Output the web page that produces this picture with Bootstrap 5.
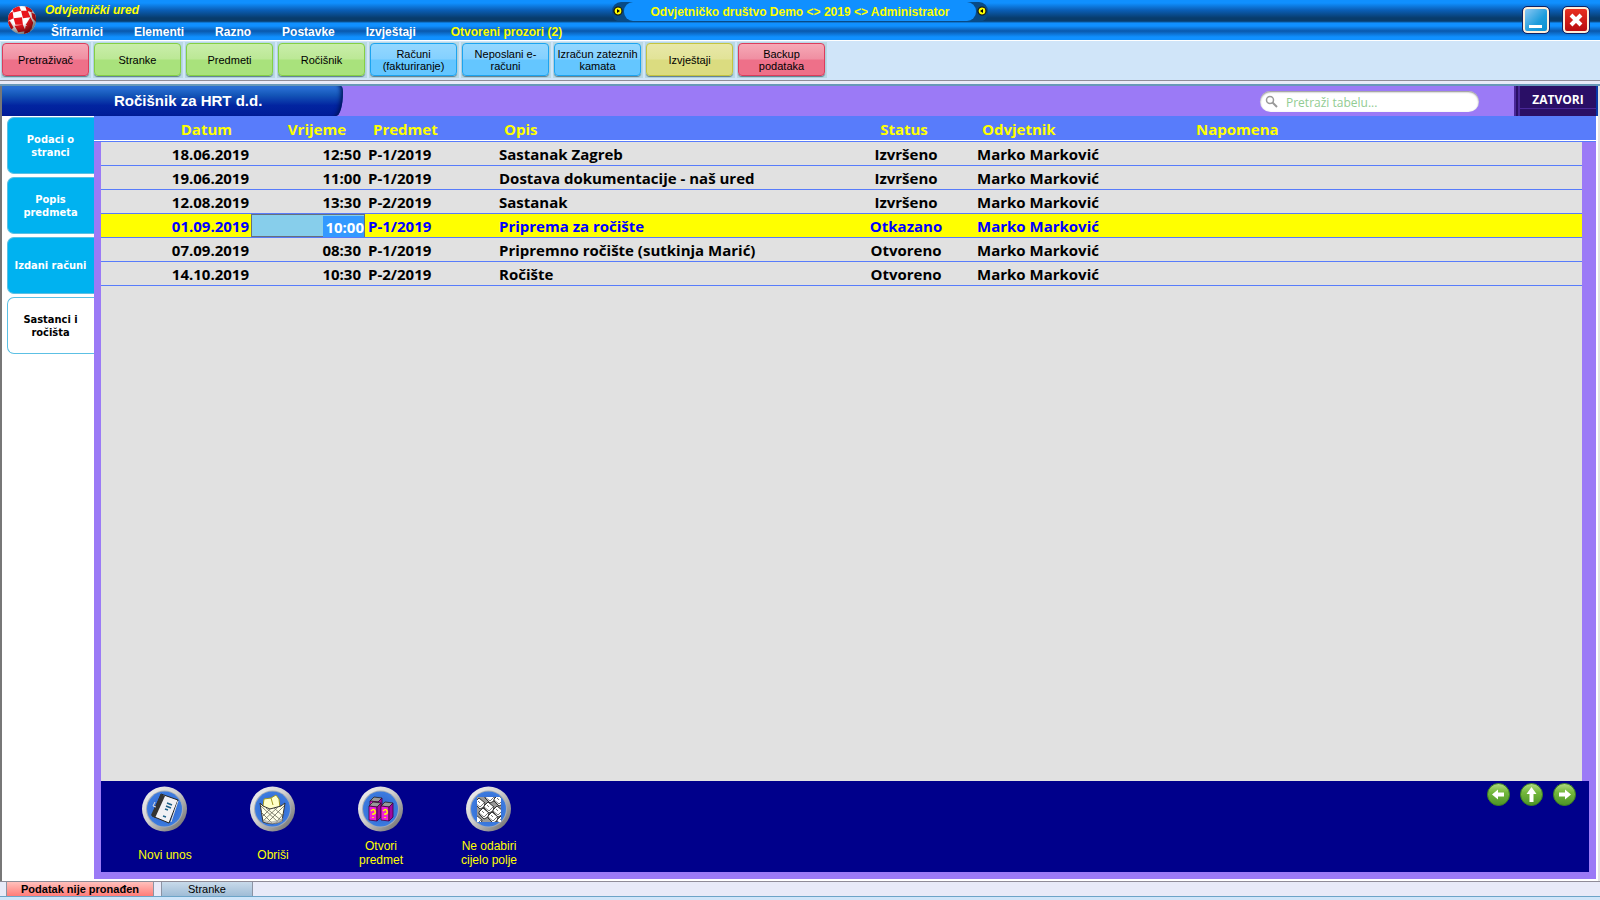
<!DOCTYPE html>
<html lang="hr">
<head>
<meta charset="utf-8">
<meta name="viewport" content="width=device-width, initial-scale=1">
<title>Odvjetnički ured</title>
<link rel="stylesheet" href="https://cdn.jsdelivr.net/npm/bootstrap@5.3.0/dist/css/bootstrap.min.css">
<style>
  body { font-family: "Liberation Sans", Arial, sans-serif; font-size: 12px; line-height: 14px; background: #fff; color: #000; }
  button, input { font-family: inherit; }
  .app { min-height: 100vh; }

  /* title and menu */
  .topbar { background: linear-gradient(#1090ff 0, #1090ff 3px, #0a5fb8 10px, #083c6c 18px, #083c6c 21px, #0b5aa0 22px, #1090ff 23px, #1090ff 26px, #0a58ac 31px, #1090ff 37px, #1090ff 40px); height: 40px; }
  .logo { width: 30px; height: 30px; margin: 5px 0 0 7px; }
  .titlebox { height: 22px; padding-left: 8px; }
  .app-title { color: #ff0; font-weight: bold; font-style: italic; line-height: 20px; }
  .menu { gap: 31px; padding-left: 14px; height: 18px; line-height: 20px; }
  .menu a { color: #fff; font-weight: bold; text-decoration: none; }
  .menu a.windows { color: #ff0; padding-left: 4px; }
  .firm { left: 50%; top: 2px; width: 376px; height: 20px; margin-left: -188px; background: #084a86; border-radius: 9px; padding: 0 1px; }
  .firm-name { background: #1090ff; border-radius: 9px; color: #ff0; font-weight: bold; line-height: 20px; height: 19px; width: 352px; }
  .winbtn { width: 26px; height: 26px; border: 2px solid #ffeed8; border-radius: 4px; outline: 1px solid #102060; padding: 0; }
  .win-min { background: linear-gradient(135deg, #8cc8f4, #1c9cdc 60%, #0a90d0); }
  .win-close { background: linear-gradient(#e83020, #b80c10); }
  .winbtns { gap: 14px; padding: 7px 11px 0 0; }

  /* shortcut bar */
  .tools { background: #d0e5f9; border-top: 1px solid #fff; border-bottom: 1px solid #8f8c98; height: 41px; padding: 1px 0 0 1px; gap: 2px; }
  .tool-slot { background: #b9d9e4; padding: 1px; width: 90px; height: 36px; }
  .tool { width: 87px; height: 33px; border: 1px solid; border-radius: 4px; font-size: 11px; line-height: 12px; padding: 0; color: #000; box-shadow: 0 1px 1px #5c7c8c; }
  .t-red { background: linear-gradient(#f6a9b6, #f08fa2 48%, #ee7089 52%, #ee7089); border-color: #dc3c5c; }
  .t-green { background: linear-gradient(#c9eeaa, #bce896 48%, #a9e27c 52%, #a9e27c); border-color: #84d044; }
  .t-blue { background: linear-gradient(#94d8ff, #84d0ff 48%, #64c6ff 52%, #64c6ff); border-color: #1ca4f0; }
  .t-yellow { background: linear-gradient(#e8e8a8, #e2e398 48%, #dbdc80 52%, #dbdc80); border-color: #c4c440; }
  .divider { height: 5px; background: #e8eaf8; border-bottom: 2px solid #6898b8; }

  /* window heading */
  .frame { border-left: 2px solid #777; border-right: 2px solid #e4e4e4; }
  .heading { background: #9b7af6; height: 30px; border-right: 2px solid #0838a8; }
  .heading-tab { width: 341px; height: 30px; background: linear-gradient(#2e74da, #1456b8 30%, #0224a0 65%, #001c98); border-radius: 0 2px 7px 0 / 0 6px 24px 0; box-shadow: inset -5px 0 4px -3px #001458; }
  .heading-tab h1 { color: #fff; font-size: 15px; line-height: 30px; font-weight: bold; padding-left: 112px; margin: 0; }
  .finder { background: #fff; border-radius: 11px; width: 219px; height: 21px; margin: 5px 35px 0 0; padding-left: 5px; box-shadow: inset 0 1px 2px #888; }
  .finder input { font-family: "Open Sans", sans-serif; font-size: 12px; line-height: 16px; border: 0; background: transparent; outline: 0; width: 180px; padding: 2px 0 0 8px; }
  .finder input::placeholder { color: #92cc92; opacity: 1; }
  .close-view { background: #2a0f66; color: #fff; border: 0; border-left: 6px double #4a2898; font-size: 12px; height: 30px; width: 82px; padding: 0 0 3px; font-family: "Open Sans", sans-serif; font-weight: bold; box-shadow: inset 0 -7px 0 #2a0f66, inset 0 -8px 0 #4a2898; }

  /* left tabs */
  .side { width: 92px; padding: 1px 0 0 5px; gap: 3px; }
  .side button { height: 57px; border: 1px solid #5cc0e4; border-right: 0; border-radius: 7px 0 0 7px; background: #00b2f0; color: #fff; font-family: "DejaVu Sans Condensed", "DejaVu Sans", sans-serif; font-weight: bold; font-size: 11px; line-height: 13px; padding: 0 1px 0 0; }
  .side button.current { background: #fff; color: #000; }

  /* schedule grid */
  .board { background: linear-gradient(#587cfb 24px, #fff 24px, #fff 25px, #587cfb 25px, #587cfb 26px, #9b7af6 26px); padding: 0 7px 7px; margin: 0 2px 2px 0; }
  .sheet { margin-right: 7px; background: linear-gradient(#587cfb 24px, #fff 24px, #fff 25px, #587cfb 25px, #587cfb 26px, #e1e1e1 26px); }
  .hearings { table-layout: fixed; width: 100%; font-family: "Open Sans", sans-serif; font-size: 15px; line-height: 21px; font-weight: bold; border-collapse: separate; border-spacing: 0; }
  .hearings th { color: #ff0; height: 26px; padding: 2px 9px 1px; white-space: nowrap; }
  .hearings td { height: 24px; padding: 2px 4px 0; border-bottom: 1px solid #587cfb; white-space: nowrap; }
  .hearings td:nth-child(3), .hearings th:nth-child(3) { padding-left: 3px; }
  .hearings th:nth-child(3) { padding-left: 8px; }
  .hearings .num { text-align: right; padding-right: 2px; }
  .hearings .num + .num { padding-right: 4px; }
  .hearings th.num, .hearings th.num + .num { padding-right: 19px; }
  .hearings .mid { text-align: center; }
  .hearings th.mid { padding: 2px 4px 1px 0; }
  .hearings .chosen td { background: #ff0; color: #00f; }
  .hearings .chosen td.editing { background: #87ceeb; box-shadow: inset 0 0 0 1px #66707c; padding: 1px 1px 0 0; }
  .editing input { width: 41px; height: 21px; border: 0; padding: 2px 0 0; background: #3399ff; color: #fff; font-weight: bold; text-align: right; display: block; margin-left: auto; }
  .c-date { width: 150px; } .c-time { width: 114px; } .c-case { width: 130px; } .c-text { width: 344px; } .c-state { width: 134px; } .c-who { width: 214px; }

  /* action bar */
  .actions { background: #00008b; height: 91px; padding: 5px 13px 0 10px; }
  .action { width: 108px; border: 0; background: transparent; color: #ff0; font-size: 12px; line-height: 14px; padding: 0; }
  .action svg { width: 47px; height: 46px; margin: 0 2px 7px 0; }
  .action span { height: 28px; }
  .action span.one-line { padding-top: 3px; }
  .steps { gap: 10px; }
  .step { border: 0; background: transparent; padding: 0; width: 23px; height: 23px; margin-top: -3px; }

  /* status strip */
  .status { background: #e8eaf8; border-top: 1px solid #8f8c98; border-bottom: 1px solid #6ca4c8; height: 16px; padding-left: 6px; gap: 7px; }
  .status button { border: 0; border-left: 1px solid #8c94a4; border-right: 1px solid #8c94a4; line-height: 14px; height: 14px; padding: 0; font-size: 11px; }
  .s-alert { width: 148px; font-weight: bold; background: linear-gradient(#ffc0bc, #ff7c78); }
  .s-win { width: 92px; background: linear-gradient(#c8daea, #9fbcd6); }
  .base { height: 3px; background: #d0e5f9; }
</style>
</head>
<body>
<div class="app d-flex flex-column">
  <header class="topbar d-flex position-relative">
    <svg class="logo flex-shrink-0" viewBox="0 0 32 32" aria-hidden="true">
      <defs>
        <radialGradient id="ball" cx=".4" cy=".35" r=".65"><stop offset=".5" stop-color="#000" stop-opacity="0"/><stop offset="1" stop-color="#000" stop-opacity=".55"/></radialGradient>
        <clipPath id="disc"><circle cx="16" cy="16" r="15"/></clipPath>
      </defs>
      <circle cx="16" cy="16" r="15" fill="#fff"/>
      <g clip-path="url(#disc)" fill="#e8141c">
        <path d="M5 2l8-1 2 5-8 2zM19 0l8 3 0 5-6-2zM0 10l6-3 1 7-6 3zM15 6l7 0 3 7-8 1zM26 8l6 3-1 7-4-4zM7 14l9-1 1 8-8 0zM25 13l3 6-2 7-6-5zM0 18l3-1 4 7-3 3zM8 22l9-1 3 7-8 1zM20 22l6 2-2 6-6 1z"/>
      </g>
      <circle cx="16" cy="16" r="15" fill="url(#ball)"/>
    </svg>
    <div class="flex-grow-1">
      <div class="titlebox"><div class="app-title">Odvjetnički ured</div></div>
      <nav class="menu d-flex">
        <a href="#">Šifrarnici</a><a href="#">Elementi</a><a href="#">Razno</a><a href="#">Postavke</a><a href="#">Izvještaji</a><a href="#" class="windows">Otvoreni prozori (2)</a>
      </nav>
    </div>
    <div class="firm position-absolute d-flex align-items-start justify-content-between">
      <svg width="10" height="18" viewBox="0 0 10 18" aria-hidden="true"><circle cx="5" cy="9" r="4" fill="#ff0" stroke="#111" stroke-width="1.2"/><path d="M4 7l3 2-3 2z"/></svg>
      <div class="firm-name text-center">Odvjetničko društvo Demo &lt;&gt; 2019 &lt;&gt; Administrator</div>
      <svg width="10" height="18" viewBox="0 0 10 18" aria-hidden="true"><circle cx="5" cy="9" r="4" fill="#ff0" stroke="#111" stroke-width="1.2"/><path d="M6 7l-3 2 3 2z"/></svg>
    </div>
    <div class="winbtns d-flex">
      <button class="winbtn win-min" aria-label="Minimiziraj"><svg class="d-block" width="22" height="22"><path d="M4 17.500h13" stroke="#fff" stroke-width="3"/></svg></button>
      <button class="winbtn win-close" aria-label="Zatvori"><svg class="d-block" width="22" height="22"><path d="M6 6l10 10M16 6L6 16" stroke="#fff" stroke-width="4"/></svg></button>
    </div>
  </header>

  <div class="tools d-flex">
    <div class="tool-slot"><button class="tool t-red">Pretraživač</button></div>
    <div class="tool-slot"><button class="tool t-green">Stranke</button></div>
    <div class="tool-slot"><button class="tool t-green">Predmeti</button></div>
    <div class="tool-slot"><button class="tool t-green">Ročišnik</button></div>
    <div class="tool-slot"><button class="tool t-blue">Računi<br>(fakturiranje)</button></div>
    <div class="tool-slot"><button class="tool t-blue">Neposlani e-<br>računi</button></div>
    <div class="tool-slot"><button class="tool t-blue text-nowrap">Izračun zateznih<br>kamata</button></div>
    <div class="tool-slot"><button class="tool t-yellow">Izvještaji</button></div>
    <div class="tool-slot"><button class="tool t-red">Backup<br>podataka</button></div>
  </div>
  <div class="divider"></div>

  <div class="frame d-flex flex-column flex-grow-1">
    <div class="heading d-flex">
      <div class="heading-tab"><h1>Ročišnik za HRT d.d.</h1></div>
      <label class="finder d-flex align-items-center ms-auto">
        <svg width="13" height="13" viewBox="0 0 13 13" fill="none" stroke="#999" aria-hidden="true"><circle cx="5" cy="5" r="3.500" stroke-width="1.500"/><path d="M7.500 7.500L12 12" stroke-width="2"/></svg>
        <input type="text" placeholder="Pretraži tabelu..." aria-label="Pretraži tabelu">
      </label>
      <button class="close-view">ZATVORI</button>
    </div>
    <div class="d-flex flex-grow-1">
      <nav class="side d-flex flex-column flex-shrink-0">
        <button>Podaci o<br>stranci</button>
        <button>Popis<br>predmeta</button>
        <button class="text-nowrap">Izdani računi</button>
        <button class="current">Sastanci i<br>ročišta</button>
      </nav>
      <main class="board d-flex flex-column flex-grow-1">
        <div class="sheet flex-grow-1">
          <table class="hearings">
            <colgroup><col class="c-date"><col class="c-time"><col class="c-case"><col class="c-text"><col class="c-state"><col class="c-who"><col></colgroup>
            <thead><tr><th class="num">Datum</th><th class="num">Vrijeme</th><th>Predmet</th><th>Opis</th><th class="mid">Status</th><th>Odvjetnik</th><th>Napomena</th></tr></thead>
            <tbody>
              <tr><td class="num">18.06.2019</td><td class="num">12:50</td><td>P-1/2019</td><td>Sastanak Zagreb</td><td class="mid">Izvršeno</td><td>Marko Marković</td><td></td></tr>
              <tr><td class="num">19.06.2019</td><td class="num">11:00</td><td>P-1/2019</td><td>Dostava dokumentacije - naš ured</td><td class="mid">Izvršeno</td><td>Marko Marković</td><td></td></tr>
              <tr><td class="num">12.08.2019</td><td class="num">13:30</td><td>P-2/2019</td><td>Sastanak</td><td class="mid">Izvršeno</td><td>Marko Marković</td><td></td></tr>
              <tr class="chosen"><td class="num">01.09.2019</td><td class="num editing"><input type="text" value="10:00" aria-label="Vrijeme"></td><td>P-1/2019</td><td>Priprema za ročište</td><td class="mid">Otkazano</td><td>Marko Marković</td><td></td></tr>
              <tr><td class="num">07.09.2019</td><td class="num">08:30</td><td>P-1/2019</td><td>Pripremno ročište (sutkinja Marić)</td><td class="mid">Otvoreno</td><td>Marko Marković</td><td></td></tr>
              <tr><td class="num">14.10.2019</td><td class="num">10:30</td><td>P-2/2019</td><td>Ročište</td><td class="mid">Otvoreno</td><td>Marko Marković</td><td></td></tr>
            </tbody>
          </table>
        </div>
        <div class="actions d-flex align-items-start">
          <svg class="position-absolute" width="0" height="0" aria-hidden="true"><defs>
            <linearGradient id="rim" x1="0" y1="0" x2="1" y2="1"><stop offset="0" stop-color="#f4f4f4"/><stop offset=".45" stop-color="#d0d0d0"/><stop offset="1" stop-color="#606060"/></linearGradient>
            <radialGradient id="well"><stop offset="0" stop-color="#2c5cc8"/><stop offset="1" stop-color="#3c7ce0"/></radialGradient>
            <linearGradient id="leaf" x1="0" y1="0" x2="0" y2="1"><stop offset="0" stop-color="#b4dc84"/><stop offset=".4" stop-color="#74b83c"/><stop offset="1" stop-color="#4c9428"/></linearGradient>
            <g id="medal"><circle cx="23.500" cy="23" r="22.500" fill="url(#rim)"/><circle cx="23.500" cy="23" r="18.500" fill="#a4acb8"/><circle cx="23.500" cy="23" r="17.500" fill="url(#well)"/></g>
            <g id="binder"><path d="M0 5l4-4 8 1-4 4z" fill="#999" stroke="#222" stroke-width=".8"/><path d="M0 5l8 1v14l-8-1z" fill="#f020d8" stroke="#400040" stroke-width=".8"/><path d="M8 6l4-4v14l-4 4z" fill="#a008a0" stroke="#400040" stroke-width=".8"/><path d="M2 10q3-3 4 0t-2 3v1M4 16v1" fill="none" stroke="#ff0" stroke-width="1.500"/></g>
            <g id="keycap"><path d="M1 4l4-4 6 5-1 4-4 2-5-5z" fill="#fff" stroke="#333"/><path d="M1 5l5 4 4-4M4 3l2 2" fill="none" stroke="#555" stroke-width=".8"/></g>
            <clipPath id="keys"><path d="M12 11h24v25H12z"/></clipPath>
          </defs></svg>
          <button class="action"><svg viewBox="0 0 47 46"><use href="#medal"/><path d="M20 8l17 6-9 23-17-7z" fill="#f0f0f4" stroke="#222"/><path d="M20 8l4 2-10 22-4-3z" fill="#333"/><path d="M26 17l5 2M25 20l5 2M24 23l3 1M22 30l3 1" stroke="#1c6088" stroke-width="1.500"/><path d="M14 16l-2 4 3 1M30 36l7-21" stroke="#ddd" fill="none"/></svg><span class="one-line d-flex align-items-center justify-content-center">Novi unos</span></button>
          <button class="action"><svg viewBox="0 0 47 46"><use href="#medal"/><path d="M14 20l1-7 7-1 5-3 3 4 1 9-9 3z" fill="#ffffc8" stroke="#a09820"/><path d="M22 12l2 7" stroke="#a09820"/><path d="M11 17l3 19q10 4 19-1l3-18-4 3-11 3-7-3z" fill="#ffffe8" stroke="#333"/><path d="M12 20l18 17M12 26l12 12M17 22l16 13M25 22l9 8M35 20L18 37M35 27l-9 11M29 21L14 35M22 22l-8 8" stroke="#665" stroke-width=".8" fill="none"/><path d="M14 33q10 5 20-1l-1 4q-10 4-18 0z" fill="#aaa" fill-opacity=".7"/></svg><span class="one-line d-flex align-items-center justify-content-center">Obriši</span></button>
          <button class="action"><svg viewBox="0 0 47 46"><use href="#medal"/><use href="#binder" x="13" y="10"/><use href="#binder" x="12" y="15"/><use href="#binder" x="24" y="15"/></svg><span class="d-flex align-items-center justify-content-center">Otvori<br>predmet</span></button>
          <button class="action"><svg viewBox="0 0 47 46"><use href="#medal"/><g clip-path="url(#keys)"><path d="M12 11h24v25H12z" fill="#999"/><use href="#keycap" x="9" y="12"/><use href="#keycap" x="18" y="16"/><use href="#keycap" x="27" y="20"/><use href="#keycap" x="19" y="6"/><use href="#keycap" x="28" y="9"/><use href="#keycap" x="13" y="22"/><use href="#keycap" x="22" y="26"/><use href="#keycap" x="31" y="30"/><use href="#keycap" x="6" y="29"/></g></svg><span class="d-flex align-items-center justify-content-center">Ne odabiri<br>cijelo polje</span></button>
          <div class="steps d-flex ms-auto">
            <button class="step" aria-label="Prethodni"><svg class="d-block" width="23" height="23" viewBox="0 0 23 23"><circle cx="11.500" cy="11.500" r="11" fill="url(#leaf)" stroke="#3c8020"/><path d="M5 11.500l6-5v3h6v4h-6v3z" fill="#fff"/></svg></button>
            <button class="step" aria-label="Gore"><svg class="d-block" width="23" height="23" viewBox="0 0 23 23"><circle cx="11.500" cy="11.500" r="11" fill="url(#leaf)" stroke="#3c8020"/><path d="M11.500 4l5 7h-3v8h-4v-8h-3z" fill="#fff"/></svg></button>
            <button class="step" aria-label="Sljedeći"><svg class="d-block" width="23" height="23" viewBox="0 0 23 23"><circle cx="11.500" cy="11.500" r="11" fill="url(#leaf)" stroke="#3c8020"/><path d="M18 11.500l-6-5v3H6v4h6v3z" fill="#fff"/></svg></button>
          </div>
        </div>
      </main>
    </div>
  </div>
  <footer>
    <div class="status d-flex"><button class="s-alert">Podatak nije pronađen</button><button class="s-win">Stranke</button></div>
    <div class="base"></div>
  </footer>
</div>
<script src="https://cdn.jsdelivr.net/npm/bootstrap@5.3.0/dist/js/bootstrap.bundle.min.js"></script>
</body>
</html>
